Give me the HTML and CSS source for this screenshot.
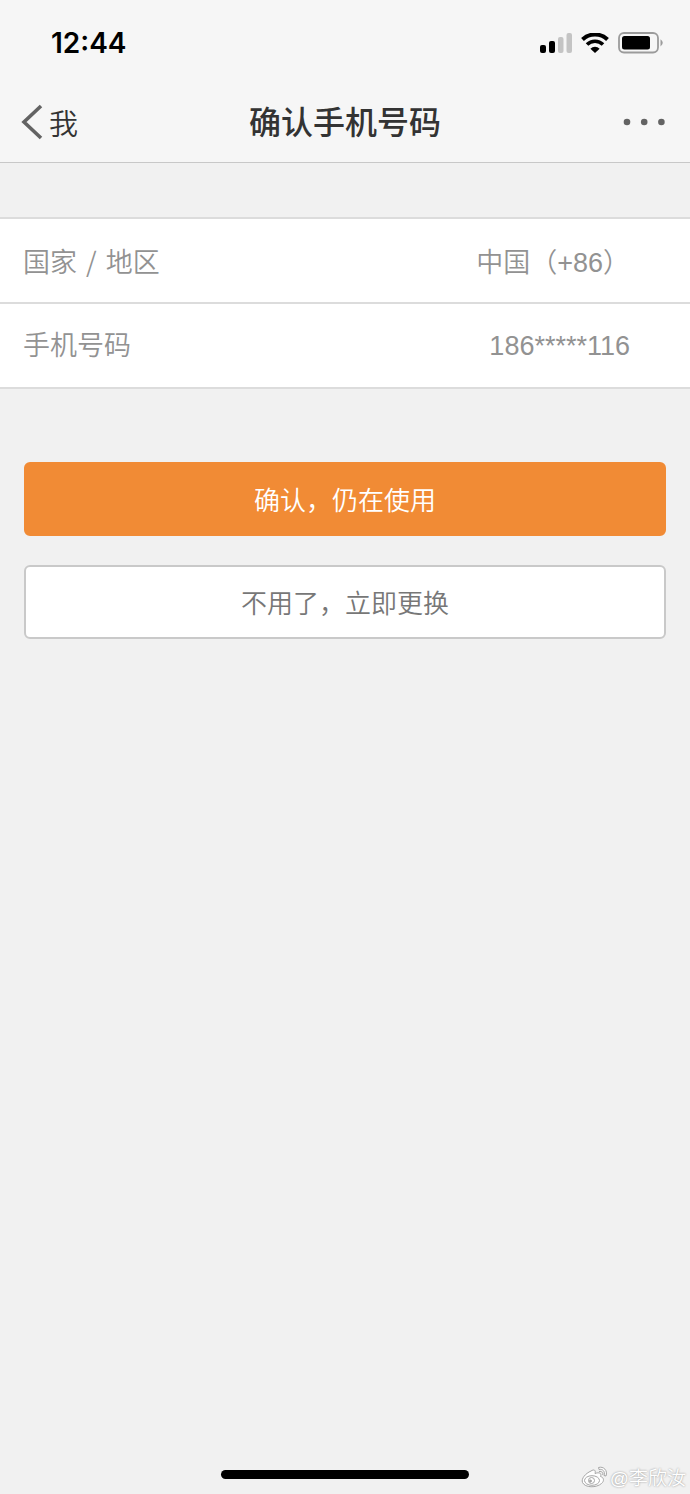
FILE: index.html
```html
<!DOCTYPE html>
<html lang="zh-CN">
<head>
    <meta charset="UTF-8">
    <meta name="viewport" content="width=device-width, initial-scale=1.0">
    <title>确认手机号码</title>
    <link rel="stylesheet" href="styles.css">
</head>
<body>
    <header>
        <div class="status-bar">
            <span class="time">12:44</span>
            <div class="status-icons">
                <svg width="32" height="20" viewBox="0 0 32 20">
                    <rect x="0" y="12" width="6" height="8" rx="2"/>
                    <rect x="9" y="8" width="6" height="12" rx="2"/>
                    <rect x="18" y="4" width="5.5" height="16" rx="2" fill="#c4c4c4"/>
                    <rect x="26.5" y="0" width="5.5" height="20" rx="2" fill="#c4c4c4"/>
                </svg>
                <svg width="28" height="20" viewBox="0 0 28 20">
                    <path d="M1.5 6.5A18 18 0 0 1 26.5 6.5" fill="none" stroke="#000" stroke-width="4"/>
                    <path d="M6 11.6A11.3 11.3 0 0 1 22 11.6" fill="none" stroke="#000" stroke-width="3.6"/>
                    <path d="M9.4 15.8A6.3 6.3 0 0 1 18.6 15.8L14 20Z"/>
                </svg>
                <svg width="46" height="22" viewBox="0 0 46 22">
                    <rect x="1" y="1" width="39" height="19.5" rx="5" fill="none" stroke="#9b9b9b" stroke-width="1.8"/>
                    <rect x="4" y="4" width="28" height="13.5" rx="2.5"/>
                    <path d="M42.5 7.2Q47 10.8 42.5 14.4Z" fill="#9b9b9b"/>
                </svg>
            </div>
        </div>
        <nav class="nav-bar">
            <a class="back" href="#">
                <svg width="22" height="36" viewBox="0 0 22 36">
                    <path d="M20 2L3 18L20 34" fill="none" stroke="#636363" stroke-width="3.6"/>
                </svg>
                <span>我</span>
            </a>
            <h1>确认手机号码</h1>
            <button type="button" class="more" aria-label="更多">
                <svg width="42" height="8" viewBox="0 0 42 8" fill="#636363">
                    <circle cx="4" cy="4" r="3.3"/>
                    <circle cx="21.2" cy="4" r="3.3"/>
                    <circle cx="38.4" cy="4" r="3.3"/>
                </svg>
            </button>
        </nav>
    </header>
    <main>
        <dl class="info-list">
            <div class="info-row">
                <dt>国家<span class="slash"> / </span>地区</dt>
                <dd>中国（+86）</dd>
            </div>
            <div class="info-row">
                <dt>手机号码</dt>
                <dd>186*****116</dd>
            </div>
        </dl>
        <div class="actions">
            <button type="button" class="btn btn-primary">确认，仍在使用</button>
            <button type="button" class="btn">不用了，立即更换</button>
        </div>
    </main>
    <footer>
        <div class="home-indicator"></div>
        <div class="watermark">
            <svg width="28" height="24" viewBox="0 0 28 24" fill="none" stroke="#a6a6a6">
                <path d="M10 6C13 4 15 5 14 8.5C18 7 21 8 19.5 11.5C23 12.5 23.5 16 20.5 18.5C15.5 23 4 23 1.5 17.5C0 13.5 4.5 8.5 10 6Z" fill="#fff"/>
                <ellipse cx="11" cy="15.5" rx="7.5" ry="4.8"/>
                <circle cx="10.5" cy="15.5" r="3"/>
                <circle cx="9.5" cy="16" r="1" fill="#a6a6a6"/>
                <path d="M17.5 2.5C22.5 1 27 5.5 25 11L23 10.5C24.5 6.5 21.5 3.5 18 4.5Z" fill="#fff"/>
                <path d="M18 6.5C21 6 22.5 8 21.5 10"/>
            </svg>
            <span>@李欣汝</span>
        </div>
    </footer>
</body>
</html>
```
FILE: styles.css
```css
* {
    box-sizing: border-box;
}
body {
    font-family: "Liberation Sans", "Noto Sans CJK SC", sans-serif;
    font-weight: 350;
    background-color: #f1f1f1;
    margin: 0;
    min-height: 100vh;
    display: flex;
    flex-direction: column;
}
svg {
    display: block;
}
header {
    background-color: #f6f6f6;
    border-bottom: 1px solid #c8c8c8;
}
.status-bar {
    display: flex;
    align-items: center;
    justify-content: space-between;
    height: 86px;
    padding: 0 26px 0 51px;
}
.time {
    font-family: Inter, sans-serif;
    font-size: 28px;
    font-weight: 600;
}
.status-icons {
    display: flex;
    align-items: center;
    gap: 9px;
}
.nav-bar {
    display: grid;
    grid-template-columns: 1fr auto 1fr;
    align-items: center;
    height: 76px;
    padding: 0 21px 4px;
}
.back {
    display: flex;
    align-items: center;
    gap: 6px;
    color: #333;
    font-size: 29px;
    text-decoration: none;
}
h1 {
    margin: 0;
    padding-bottom: 4px;
    color: #333;
    font-size: 32px;
    font-weight: 500;
}
.more {
    justify-self: end;
    margin-right: 4px;
    padding: 0;
    border: none;
    background: none;
    cursor: pointer;
}
main {
    flex: 1;
}
.info-list {
    margin: 54px 0 0;
    border-top: 2px solid #dcdcdc;
    background-color: #fff;
    color: #929292;
    font-size: 27px;
}
.info-row {
    display: flex;
    align-items: baseline;
    justify-content: space-between;
    height: 85px;
    padding: 0 60px 0 23px;
    border-bottom: 2px solid #dcdcdc;
    line-height: 84px;
}
.info-row dd {
    margin: 0;
}
.slash {
    font-family: "Noto Sans CJK SC", sans-serif;
    margin: 0 3px;
}
.actions {
    display: flex;
    flex-direction: column;
    gap: 29px;
    padding: 73px 24px;
}
.btn {
    height: 74px;
    padding: 0 0 2px;
    border: 2px solid #c9c9c9;
    border-radius: 6px;
    background-color: #fff;
    color: #777;
    font-family: inherit;
    font-size: 26px;
    font-weight: inherit;
    cursor: pointer;
}
.btn-primary {
    border-color: #f18b35;
    background-color: #f18b35;
    color: #fff;
}
footer {
    position: relative;
    padding-bottom: 15px;
}
.home-indicator {
    width: 36%;
    height: 9px;
    margin: 0 auto;
    border-radius: 5px;
    background-color: #000;
}
.watermark {
    position: absolute;
    right: 4px;
    bottom: 4px;
    display: flex;
    align-items: center;
    gap: 1px;
    color: #fff;
    font-size: 19px;
    text-shadow: 0 0 2px #888;
}
```
